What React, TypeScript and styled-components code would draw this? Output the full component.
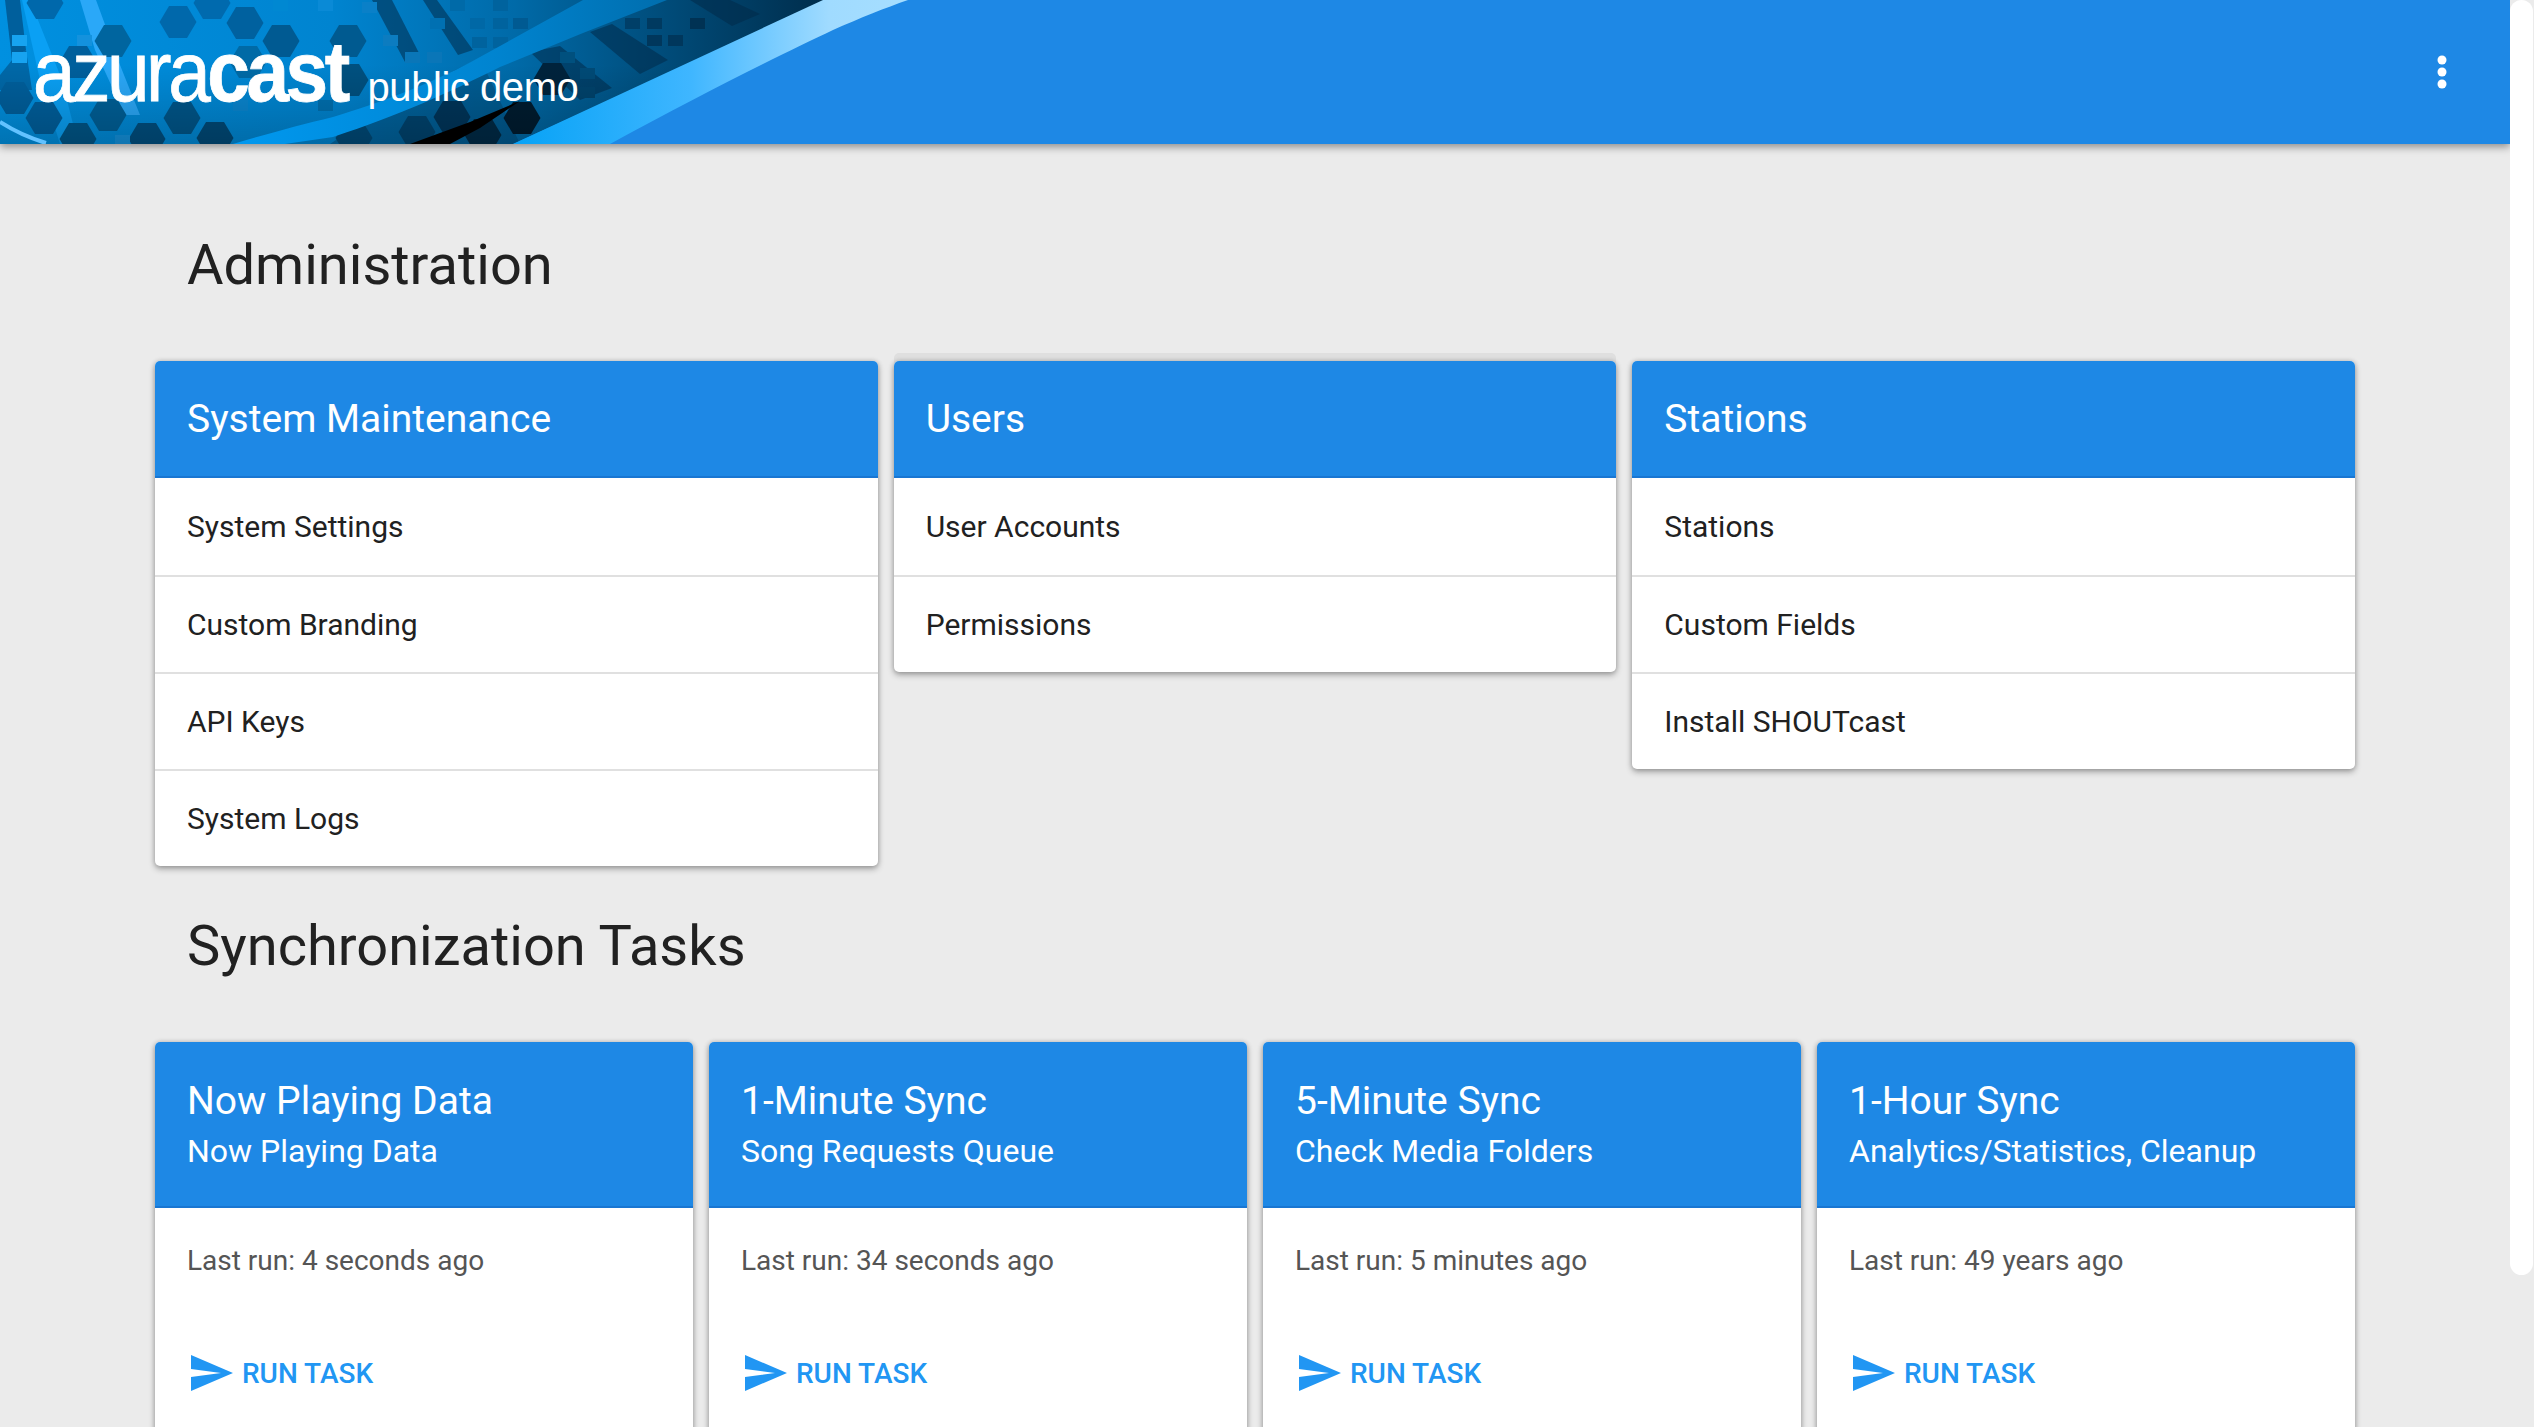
import React from "react";
import styled, { createGlobalStyle } from "styled-components";

const Global = createGlobalStyle`
  html, body { margin: 0; padding: 0; height: 100%; overflow: hidden; background: #ebebeb; }
  body { font-family: Roboto, "Liberation Sans", sans-serif; color: #212121; }
  * { box-sizing: border-box; }
`;

const Viewport = styled.div`
  display: flex;
  height: 100vh;
  overflow: hidden;
`;
const Page = styled.div`
  flex: 1;
  min-width: 0;
  height: 100%;
  overflow: hidden;
`;
const ScrollTrack = styled.div`
  width: 24px;
  flex: none;
  padding-right: 1px;
`;
const ScrollThumb = styled.div`
  height: 1275px;
  background: #fff;
  border-radius: 12px;
`;

const TopBar = styled.header`
  position: relative;
  height: 144px;
  background: #1e88e5;
  box-shadow: 0 3px 8px rgba(0, 0, 0, 0.4);
  display: flex;
  align-items: flex-start;
  justify-content: space-between;
  padding: 0 63px 0 33px;
  color: #fff;
`;
const Banner = styled.svg`
  position: absolute;
  left: 0;
  top: 0;
  display: block;
`;
const Brand = styled.div`
  position: relative;
  display: flex;
  align-items: baseline;
  gap: 21px;
  height: 130px;
  padding-top: 13px;
  font-family: "Liberation Sans", Arial, sans-serif;
  line-height: 117px;
`;
const LogoWord = styled.span`
  display: inline-block;
  font-size: 85px;
  letter-spacing: -3.8px;
  -webkit-text-stroke: 0.8px #fff;
  transform: scaleX(0.9);
  transform-origin: left center;
  margin-right: -35px;
  b { font-weight: 700; }
`;
const LogoTag = styled.span`
  font-size: 40px;
  letter-spacing: -0.45px;
`;
const MenuButton = styled.svg`
  position: relative;
  align-self: center;
  display: block;
`;

const Content = styled.main`
  padding: 87px 155px 0;
`;
const SectionTitle = styled.h1<{ $gap?: number }>`
  margin: ${(p) => p.$gap ?? 0}px 0 62px;
  padding-left: 32px;
  font-size: 56px;
  font-weight: 400;
  line-height: 68px;
  color: #212121;
`;
const AdminGrid = styled.div`
  display: grid;
  grid-template-columns: repeat(3, 1fr);
  gap: 16px;
  align-items: start;
`;
const TaskGrid = styled.div`
  display: grid;
  grid-template-columns: repeat(4, 1fr);
  gap: 16px;
  align-items: start;
`;
const Card = styled.section<{ $lifted?: boolean }>`
  background: #fff;
  border-radius: 5px;
  overflow: hidden;
  box-shadow: ${(p) => (p.$lifted ? "0 -8px 0 rgba(0, 0, 0, 0.05)," : "")} 0 3px 6px rgba(0, 0, 0, 0.3),
    0 0 5px rgba(0, 0, 0, 0.18);
`;
const CardHead = styled.div`
  background: #1e88e5;
  border-bottom: 2px solid #1976d2;
  color: #fff;
  padding: 0 32px;
`;
const AdminHead = styled(CardHead)`
  height: 117px;
  display: flex;
  align-items: center;
`;
const AdminTitle = styled.h2`
  margin: 0;
  font-size: 39px;
  font-weight: 400;
`;
const TaskHead = styled(CardHead)`
  height: 166px;
  padding-top: 33px;
`;
const TaskTitle = styled.h2`
  margin: 0;
  font-size: 39px;
  font-weight: 400;
  line-height: 52px;
`;
const TaskSub = styled.div`
  font-size: 32px;
  line-height: 48px;
`;
const Row = styled.a`
  display: flex;
  align-items: center;
  height: 97px;
  padding: 0 32px;
  font-size: 30px;
  color: #212121;
  & + & { border-top: 2px solid #e0e0e0; }
`;
const TaskBody = styled.div`
  padding: 33px 32px 80px;
`;
const LastRun = styled.div`
  font-size: 28px;
  line-height: 40px;
  color: #555;
`;
const RunTask = styled.a`
  display: flex;
  align-items: center;
  gap: 7px;
  margin-top: 68px;
  height: 48px;
  font-size: 28px;
  font-weight: 500;
  color: #2196f3;
  svg { display: block; flex: none; }
`;

type Hex = [number, number, string];
const hexes: Hex[] = [
  [178, 22, "#0068ab"], [245, 23, "#00619f"], [212, 3, "#006aae"], [113, 41, "#00659f"],
  [45, 3, "#0068ab"], [281, 41, "#005a92"], [348, 41, "#005a90"], [78, 62, "#005f9c"],
  [248, 62, "#006aa6"], [15, 98, "#005f9c"], [44, 118, "#005f9c"], [182, 118, "#00568a"],
  [108, 115, "#006098"], [78, 139, "#005688"], [147, 139, "#004f80"], [215, 138, "#004a78"],
  [350, 80, "#00507f"], [417, 132, "#00436e"], [452, 117, "#00355a"], [483, 135, "#002a46"],
  [354, 138, "#004a78"], [552, 79, "#00233c"], [522, 118, "#001c30"],
];
const squares: [number, number, string][] = [
  [12, 35, "#17a3f0"], [12, 52, "#17a3f0"], [77, 35, "#1492dd"], [115, 135, "#1492dd"],
  [273, 0, "#0088d2"], [318, 0, "#0a8ad6"], [362, 2, "#0a80c8"], [383, 35, "#0c7cc0"],
  [405, 52, "#0a76b8"], [427, 52, "#0a76b8"], [430, 18, "#0070b2"], [450, 0, "#006aa8"],
  [470, 18, "#0068a6"], [493, 18, "#00639e"], [513, 18, "#005a92"], [472, 37, "#00639e"],
  [493, 0, "#00639e"], [493, 37, "#00639e"], [625, 18, "#003f68"], [647, 18, "#003a60"],
  [690, 18, "#003254"], [647, 35, "#00375c"], [668, 35, "#00375c"], [560, 52, "#00507e"],
  [580, 68, "#004a76"], [580, 87, "#00436c"], [233, 100, "#0a86d0"], [318, 100, "#0070b0"],
];
const stripes: string[] = [
  "372,0 392,0 420,55 405,62",
  "423,0 437,0 473,50 458,55",
  "590,32 612,24 668,60 640,74",
  "530,52 560,46 612,88 580,100",
  "690,0 730,0 760,14 732,26",
];

const hexPoints = (x: number, y: number) =>
  [[-18.5, 0], [-9, -16], [9, -16], [18.5, 0], [9, 16], [-9, 16]]
    .map(([a, b]) => `${x + a},${y + b}`)
    .join(" ");

const BannerArt = () => (
  <Banner width="1000" height="144" viewBox="0 0 1000 144" aria-hidden="true">
    <defs>
      <linearGradient id="base" x1="0" x2="1" y1="0" y2="0">
        <stop offset="0" stopColor="#0090e0" />
        <stop offset="0.4" stopColor="#0084d0" />
        <stop offset="0.62" stopColor="#006aa8" />
        <stop offset="0.8" stopColor="#004c7a" />
        <stop offset="1" stopColor="#002c4a" />
      </linearGradient>
      <linearGradient id="band" x1="0" x2="1" y1="0" y2="0">
        <stop offset="0" stopColor="#0098ef" />
        <stop offset="0.6" stopColor="#0084d0" />
        <stop offset="1" stopColor="#006eae" />
      </linearGradient>
      <linearGradient id="swoosh" x1="0" x2="1" y1="0" y2="0">
        <stop offset="0" stopColor="#06a2f6" />
        <stop offset="0.45" stopColor="#3fb6ff" />
        <stop offset="0.8" stopColor="#a0dbff" />
        <stop offset="1" stopColor="#a6deff" />
      </linearGradient>
      <linearGradient id="shade" x1="0" x2="0" y1="0" y2="1">
        <stop offset="0.45" stopColor="#000" stopOpacity="0" />
        <stop offset="1" stopColor="#000" stopOpacity="0.2" />
      </linearGradient>
      <clipPath id="clip">
        <path d="M0,0 L830,0 L513,144 L0,144 Z" />
      </clipPath>
    </defs>
    <g clipPath="url(#clip)">
      <rect width="830" height="144" fill="url(#base)" />
      <polygon points="5,0 20,0 26,50 12,60" fill="#005f9c" />
      <polygon points="12,60 26,50 32,90 0,90 0,75" fill="#0068a8" />
      <polygon points="22,0 30,0 62,80 78,144 60,144 40,80" fill="#0aa0f4" />
      <polygon points="80,0 96,0 118,60 140,115 125,115 95,50" fill="#2aa8f8" />
      <polygon points="330,144 520,144 480,58 400,97" fill="#00446e" opacity="0.45" />
      {stripes.map((p) => (
        <polygon key={p} points={p} fill="#002a48" opacity="0.55" />
      ))}
      {hexes.map(([x, y, c]) => (
        <polygon key={`${x}-${y}`} points={hexPoints(x, y)} fill={c} />
      ))}
      {squares.map(([x, y, c]) => (
        <rect key={`${x}-${y}`} x={x} y={y} width="15" height="11" fill={c} />
      ))}
      <rect width="830" height="144" fill="url(#shade)" />
      <polygon points="410,144 470,122 520,101 480,128 450,144" fill="#000" />
      <path
        d="M233,144 C270,133 300,125 333,117 C380,103 440,80 480,57 L583,0 L667,0 L583,33 L500,67 C450,92 400,115 333,137 L285,144 Z"
        fill="url(#band)"
      />
      <path d="M0,122 Q22,136 46,143" fill="none" stroke="#62c2ff" strokeWidth="4" />
    </g>
    <path
      d="M513,144 L823,0 L908,0 C885,8 860,18 833,30 C780,55 700,95 610,144 Z"
      fill="url(#swoosh)"
    />
  </Banner>
);

const SendIcon = () => (
  <svg width="48" height="48" viewBox="0 0 24 24" fill="#2196f3" aria-hidden="true">
    <path d="M2.01 21L23 12 2.01 3 2 10l15 2-15 2z" />
  </svg>
);

const adminCards = [
  { title: "System Maintenance", items: ["System Settings", "Custom Branding", "API Keys", "System Logs"] },
  { title: "Users", items: ["User Accounts", "Permissions"], lifted: true },
  { title: "Stations", items: ["Stations", "Custom Fields", "Install SHOUTcast"] },
];
const tasks = [
  { title: "Now Playing Data", sub: "Now Playing Data", last: "Last run: 4 seconds ago" },
  { title: "1-Minute Sync", sub: "Song Requests Queue", last: "Last run: 34 seconds ago" },
  { title: "5-Minute Sync", sub: "Check Media Folders", last: "Last run: 5 minutes ago" },
  { title: "1-Hour Sync", sub: "Analytics/Statistics, Cleanup", last: "Last run: 49 years ago" },
];

export default function App() {
  return (
    <Viewport>
      <Global />
      <Page>
        <TopBar>
          <BannerArt />
          <Brand>
            <LogoWord>
              azura<b>cast</b>
            </LogoWord>
            <LogoTag>public demo</LogoTag>
          </Brand>
          <MenuButton width="10" height="34" viewBox="0 0 10 34" fill="#fff" aria-label="Menu">
            <circle cx="5" cy="5" r="4.5" />
            <circle cx="5" cy="17" r="4.5" />
            <circle cx="5" cy="29" r="4.5" />
          </MenuButton>
        </TopBar>
        <Content>
          <SectionTitle>Administration</SectionTitle>
          <AdminGrid>
            {adminCards.map((c) => (
              <Card key={c.title} $lifted={c.lifted}>
                <AdminHead>
                  <AdminTitle>{c.title}</AdminTitle>
                </AdminHead>
                {c.items.map((i) => (
                  <Row key={i}>{i}</Row>
                ))}
              </Card>
            ))}
          </AdminGrid>
          <SectionTitle $gap={46}>Synchronization Tasks</SectionTitle>
          <TaskGrid>
            {tasks.map((t) => (
              <Card key={t.title}>
                <TaskHead>
                  <TaskTitle>{t.title}</TaskTitle>
                  <TaskSub>{t.sub}</TaskSub>
                </TaskHead>
                <TaskBody>
                  <LastRun>{t.last}</LastRun>
                  <RunTask>
                    <SendIcon />
                    RUN TASK
                  </RunTask>
                </TaskBody>
              </Card>
            ))}
          </TaskGrid>
        </Content>
      </Page>
      <ScrollTrack>
        <ScrollThumb />
      </ScrollTrack>
    </Viewport>
  );
}
